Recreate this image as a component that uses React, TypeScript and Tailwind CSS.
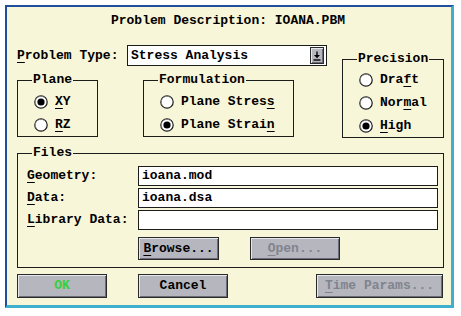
import React from "react";

const FONT = { fontFamily: '"Liberation Mono", "DejaVu Sans Mono", monospace' };

function U({ children }: { children: React.ReactNode }) {
  return <span className="underline decoration-1 underline-offset-[3px]">{children}</span>;
}

function Radio({ checked, children }: { checked?: boolean; children: React.ReactNode }) {
  return (
    <div className="flex h-[23px] items-center gap-[7px]">
      <svg width="14" height="14" viewBox="0 0 14 14" className="shrink-0">
        <circle cx="7" cy="7" r="6.2" fill="#ffffff" stroke="#1a1a1a" strokeWidth="1.2" />
        <path d="M2.9 11.1 A5.6 5.6 0 0 1 11.1 2.9" fill="none" stroke="#8a8a8a" strokeWidth="0.8" />
        {checked && <circle cx="7" cy="7" r="3.6" fill="#000000" />}
      </svg>
      <span className="leading-[16px]">{children}</span>
    </div>
  );
}

function Group({
  title,
  className,
  children,
}: {
  title: string;
  className?: string;
  children: React.ReactNode;
}) {
  return (
    <div className={"relative border border-[#1c1c1c] " + (className ?? "")}>
      <span className="absolute -top-[9px] left-[14px] bg-[#f8f6d8] px-[1px] leading-[16px]">{title}</span>
      {children}
    </div>
  );
}

function Button({
  children,
  className,
  textClass,
}: {
  children: React.ReactNode;
  className?: string;
  textClass?: string;
}) {
  return (
    <div
      className={
        "flex items-center justify-center border border-[#2a2a2a] bg-[#b6b6be] shadow-[inset_1px_1px_0_#e6e6ee,inset_-1px_-1px_0_#6c6c78] " +
        (className ?? "")
      }
    >
      <span className={"leading-[16px] " + (textClass ?? "text-black")}>{children}</span>
    </div>
  );
}

function Field({ label, value }: { label: React.ReactNode; value: string }) {
  return (
    <div className="flex h-[20px] items-center">
      <div className="w-[111px] shrink-0 leading-[16px]">{label}</div>
      <div className="flex h-[20px] flex-1 items-center border border-[#1c1c1c] bg-white pl-[3px] leading-[16px]">
        {value}
      </div>
    </div>
  );
}

export default function App() {
  return (
    <div className="min-h-[316px] w-[461px] bg-white pl-[5px] pt-[5px]" style={FONT}>
      <div className="h-[303px] w-[449px] border-b-[3px] border-l-2 border-r-[3px] border-t-2 border-b-[#3fb0cc] border-l-[#1f4e9e] border-r-[#3fb0cc] border-t-[#1f4e9e] bg-[#f8f6d8]">
        <div className="flex h-full flex-col pb-[7px] pl-[10px] pr-[7px] pt-[6px] text-[13px] font-bold text-black">
          <div className="h-[16px] pr-[5px] text-center leading-[16px]">Problem Description: IOANA.PBM</div>

          <div className="mt-[16px] flex items-start">
            <div className="flex w-[311px] flex-col">
              <div className="flex h-[21px] items-center">
                <div className="w-[110px] shrink-0 leading-[16px]">
                  <U>P</U>roblem Type:
                </div>
                <div className="flex h-[21px] w-[200px] items-center border border-[#1c1c1c] bg-white pl-[3px] pr-[2px]">
                  <span className="flex-1 leading-[16px]">Stress Analysis</span>
                  <div className="flex h-[17px] w-[14px] items-center justify-center border border-[#2a2a2a] bg-[#b6b6be] shadow-[inset_1px_1px_0_#e6e6ee,inset_-1px_-1px_0_#6c6c78]">
                    <svg width="8" height="10" viewBox="0 0 8 10">
                      <path d="M4 0.5 V6" stroke="#000" strokeWidth="1.4" />
                      <path d="M1 4 L4 7.2 L7 4 Z" fill="#000" />
                      <path d="M0.5 9 H7.5" stroke="#000" strokeWidth="1.4" />
                    </svg>
                  </div>
                </div>
              </div>

              <div className="mt-[14px] flex items-start">
                <Group title="Plane" className="w-[81px] pl-[16px] pt-[9px]">
                  <Radio checked>
                    <U>X</U>Y
                  </Radio>
                  <Radio>
                    <U>R</U>Z
                  </Radio>
                </Group>
                <Group title="Formulation" className="ml-[45px] w-[151px] pl-[16px] pt-[9px]">
                  <Radio>
                    Plane Stres<U>s</U>
                  </Radio>
                  <Radio checked>
                    Plane Strai<U>n</U>
                  </Radio>
                </Group>
              </div>
            </div>

            <Group title="Precision" className="ml-[14px] mt-[14px] w-[102px] pl-[16px] pt-[8px]">
              <Radio>
                Dra<U>f</U>t
              </Radio>
              <Radio>
                Nor<U>m</U>al
              </Radio>
              <Radio checked>
                <U>H</U>igh
              </Radio>
            </Group>
          </div>

          <Group title="Files" className="mt-[15px] pb-[7px] pl-[9px] pr-[5px] pt-[12px]">
            <div className="flex flex-col gap-[2px]">
              <Field
                label={
                  <>
                    <U>G</U>eometry:
                  </>
                }
                value="ioana.mod"
              />
              <Field
                label={
                  <>
                    <U>D</U>ata:
                  </>
                }
                value="ioana.dsa"
              />
              <Field
                label={
                  <>
                    <U>L</U>ibrary Data:
                  </>
                }
                value=""
              />
            </div>
            <div className="ml-[111px] mt-[7px] flex">
              <Button className="h-[23px] w-[81px]">
                <U>B</U>rowse...
              </Button>
              <Button className="ml-[31px] h-[23px] w-[90px]" textClass="text-[#80848f]">
                <U>O</U>pen...
              </Button>
            </div>
          </Group>

          <div className="mt-[6px] flex">
            <Button className="h-[24px] w-[90px]" textClass="text-[#36d03a]">
              OK
            </Button>
            <Button className="ml-[31px] h-[24px] w-[90px]">Cancel</Button>
            <Button className="ml-auto mr-[1px] h-[24px] w-[127px]" textClass="text-[#80848f]">
              <U>T</U>ime Params...
            </Button>
          </div>
        </div>
      </div>
    </div>
  );
}
